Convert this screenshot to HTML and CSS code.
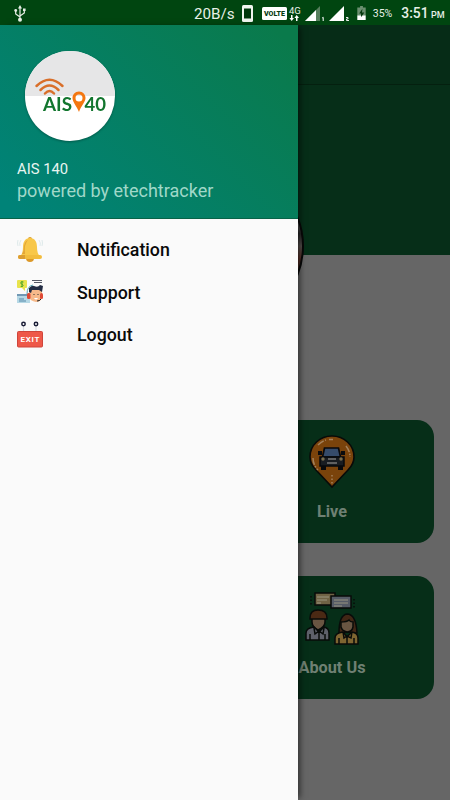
FILE: index.html
```html
<!DOCTYPE html>
<html lang="en">
<head>
<meta charset="utf-8">
<title>AIS 140</title>
<link rel="stylesheet" href="styles.css">
</head>
<body>
<div class="screen">
  <header class="status">
    <svg class="usb" width="12" height="17" viewBox="0 0 12 17" fill="none" stroke="#e8f0e8" stroke-width="1.200"><path d="M6 3v11M1.700 6v3L6 12M10.300 5v3L6 11"/><g fill="#e8f0e8" stroke="none"><path d="M6 0l2 3.500H4zM9 3.500h2.600v2.500H9z"/><circle cx="1.700" cy="5.500" r="1.400"/><circle cx="6" cy="14.700" r="2"/></g></svg>
    <span class="rate">20B/s</span>
    <svg class="phone" width="11" height="17" viewBox="0 0 11 17"><rect width="11" height="17" rx="1.500" fill="#f0f5f0"/><path fill="#00380c" d="M2 3.500h7v10H2z"/></svg>
    <svg class="volte" width="25" height="13" viewBox="0 0 25 13"><rect width="25" height="13" rx="1.500" fill="#fff"/><text x="2" y="9.300" textLength="21" lengthAdjust="spacingAndGlyphs">VOLTE</text></svg>
    <div class="net"><span>4G</span><svg width="10" height="6" viewBox="0 0 10 6" fill="#fff"><path d="M2 0h1.500v3H5L2.700 6 .4 3H2zM7 6h1.500V3H10L7.700 0 5.400 3H7z"/></svg></div>
    <svg class="sig1" width="20" height="15" viewBox="0 0 20 15"><path fill="#567f5d" d="M15 0v15H0z"/><path fill="#fff" d="M11 4v11H0z"/><path d="M17.200 12l1-.7V15" fill="none" stroke="#fff"/></svg>
    <svg class="sig2" width="21" height="15" viewBox="0 0 21 15"><path fill="#fff" d="M15 0v15H0z"/><path d="M17 11.500h2v1.500h-1.500v1.500H20" fill="none" stroke="#fff" stroke-width=".9"/></svg>
    <svg class="battery" width="9" height="14" viewBox="0 0 9 15"><path fill="#6b8f70" d="M3 0h3v1.500h3V10H0V1.500h3z"/><path fill="#fff" d="M0 10h9v5H0z"/><path fill="#06380f" d="M5.500 3L2 8h2v4l3.500-5H5z"/></svg>
    <span class="pct">35%</span>
    <span class="time">3:51 <small>PM</small></span>
  </header>
  <main class="home">
    <div class="bar"></div>
    <div class="banner"></div>
    <div class="cards">
      <section class="card">
        <svg width="46" height="54" viewBox="0 0 46 54"><path d="M23 1C11 1 1 10 1 22c0 5 2 9 6 13l16 17 16-17c4-4 6-8 6-13C45 10 35 1 23 1z" fill="#7a430b" stroke="#080a08" stroke-width="1.600"/><g fill="none" stroke="#a3815c" stroke-width="1.500"><path d="M9 10q4-4 8-5m3-.5h4M37 11q4 5 4 11M4 23q0 7 5 12" stroke-dasharray="7 1.500 1.500 1.500"/><path d="M23 40v10" stroke-dasharray="1.500 2"/></g><path d="M15.500 13h14l2 9h-18z" fill="#354b6a" stroke="#08090c" stroke-width="1.700"/><path d="M9 16h4v4H9zM32 16h4v4h-4z" fill="#090b0e"/><path d="M11 22h24v9H11z" fill="#181c21" stroke="#07090b" stroke-width="1.500"/><path d="M12 31h5v4h-5zM29 31h5v4h-5z" fill="#08090b"/><path d="M19 24h8M18 28h10" stroke="#777" stroke-width="1.500"/><circle cx="14" cy="24" r="1.700" fill="#786d4e"/><circle cx="32" cy="24" r="1.700" fill="#786d4e"/></svg>
        <h2>Live</h2>
      </section>
      <section class="card">
        <svg width="54" height="54" viewBox="0 0 54 54" stroke="#080b09" stroke-width="1.500"><path d="M10 2h20v12H10z" fill="#706345"/><path d="M26 5h20v12H26z" fill="#555b66"/><path d="M12 6h12M12 9h10M12 12h4M29 9h14M29 12h14M29 15h8" stroke="#999580" stroke-width="1"/><path d="M6 5v10M49 8v10" stroke-dasharray="1.500 2"/><path d="M7 25v6q0 5 6 8 7-3 7-8v-6z" fill="#695542"/><path d="M5 28v-1q0-8 8-8 9 0 9 8v1z" fill="#4a2914"/><path d="M1 49v-7q0-5 8-6l5 5 5-5q5 1 5 6v7z" fill="#5e606a"/><path d="M5 43v6M20 43v6M9 37l1 6 4-3 4 3 1-6M14 40v9" fill="none"/><path d="M34 42q0-18 8-19 9 0 10 19-4 1-7-1h-5q-3 2-6 1z" fill="#412615"/><path d="M36 31q6 0 8-2 1 2 4 2v5q-1 5-6 5-5-1-6-5z" fill="#695542"/><path d="M30 53v-6q0-5 8-6l4 5 5-5q6 1 6 6v6z" fill="#7e6531"/><path d="M38 41l1 6 3-2 4 2 1-6M42 46v7M34 47v6M49 47v6" fill="none"/></svg>
        <h2>About Us</h2>
      </section>
    </div>
    <div class="avatar"></div>
  </main>
  <aside class="drawer">
    <div class="profile">
      <svg class="logo" width="98" height="98" viewBox="0 0 98 98"><defs><clipPath id="disc"><circle cx="49" cy="49" r="45"/></clipPath></defs><g clip-path="url(#disc)"><path fill="#fff" d="M0 0h98v98H0z"/><path fill="#e6e6e7" d="M0 0h98v49H0z"/></g><g fill="none" stroke="#d96f2a" stroke-width="2.500" stroke-linecap="round"><path d="M15.500 39q13-12.500 26 0M19.500 43q9-9 18 0M24 46.500q4.500-5 9 0"/></g><g class="logo-text"><text x="22" y="63.500" textLength="29" lengthAdjust="spacingAndGlyphs">AIS</text><text x="63.500" y="63.500" textLength="21.500" lengthAdjust="spacingAndGlyphs">40</text></g><path fill="#f47710" fill-rule="evenodd" d="M58 44.500c-4 0-6.500 3-6.500 6.500 0 4 4 8 6.500 14 2-6 6.500-10 6.500-14 0-3.500-2.500-6.500-6.500-6.500zm0 3a3.500 3.500 0 1 1 0 7 3.500 3.500 0 0 1 0-7z"/></svg>
      <p class="name">AIS 140</p>
      <p class="powered">powered by etechtracker</p>
    </div>
    <nav class="menu">
      <a><svg width="26" height="27" viewBox="0 0 26 27"><path d="M4 4q-2 3-1 6M1 4q-1 3 0 6M22 4q2 3 1 6M25 4q1 3 0 6" fill="none" stroke="#d7e5e6" stroke-width=".8"/><circle cx="13" cy="3" r="2" fill="#d79b29"/><path d="M9 22h8q0 4-4 4t-4-4" fill="#dc9929"/><path d="M13 2C8 2 6 6 6 11q0 7-3 9h20q-3-2-3-9c0-5-2-9-7-9z" fill="#f8c749"/><path d="M11 4q-4 4-3 14H5q2-3 2-8 1-5 4-6z" fill="#e4a637"/><rect x="1" y="19" width="24" height="4" rx="2" fill="#f2bc3d"/><path d="M3 19h5v4H3q-2 0-2-2t2-2" fill="#dc9e32"/></svg><span>Notification</span></a>
      <a><svg width="26" height="26" viewBox="0 0 26 26"><path d="M0 15h13v9H0z" fill="#b6d8e5"/><path d="M0 15h13v2H0z" fill="#7198b4"/><path d="M2 20h5M2 22h7" stroke="#5689aa"/><path d="M1 1h8q1 0 1 1v6q0 1-1 1H8v3L5 9H1Q0 9 0 8V2q0-1 1-1" fill="#e8e34c"/><path d="M6.500 3Q3.500 2 3.700 4q0 1 1.500 1.200Q7 6 5.500 7.500H3.700M5 2v6" fill="none" stroke="#54a72a"/><path d="M15 1.500h10M17 3.500h8" stroke="#555966"/><path d="M12 11h13v7q-1 5-6 5-6-1-7-5z" fill="#f6b98a"/><path d="M12 13V9q3-3 5-2 4 2 6-1l3 1-1 6-3-2H15l-1 3z" fill="#222c43"/><path d="M10 15q0-8 6-9" fill="none" stroke="#58a8b5"/><rect x="10" y="14" width="3.500" height="6" rx="1.500" fill="#df4935"/><rect x="23" y="14" width="3" height="6" rx="1.500" fill="#df4935"/><path d="M17 15v1M21 15v1" stroke="#333"/><path d="M17 19h4q-2 3-4 0" fill="#fff"/><path d="M24 20q-1 2-4 2" fill="none" stroke="#222"/></svg><span>Support</span></a>
      <a><svg width="26" height="27" viewBox="0 0 26 27"><path d="M6.500 3v8M19 3v8" stroke="#d9dce2" stroke-width="1.200"/><g fill="#fff" stroke="#191c36" stroke-width="1.500"><circle cx="6.500" cy="3" r="1.700"/><circle cx="19" cy="3" r="1.700"/></g><rect x=".5" y="10.500" width="25" height="15.500" rx="1" fill="#ee5849" stroke="#cf453b"/><text class="exit" x="3.500" y="21" textLength="19">EXIT</text></svg><span>Logout</span></a>
    </nav>
  </aside>
</div>
</body>
</html>
```
FILE: styles.css
```css
* { box-sizing: border-box; }
body { margin: 0; font-family: Roboto, "Liberation Sans", sans-serif; }
h2, p { margin: 0; }
svg { display: block; flex: none; }
.screen { position: relative; width: 450px; height: 800px; overflow: hidden; background: #666; }
.status { display: flex; align-items: center; height: 25px; padding: 1px 7px 0 14px; background: #004510; color: #e7f0e7; white-space: nowrap; }
.rate { width: 40px; margin-left: 168px; font-size: 15.2px; line-height: 24px; padding-top: 1px; }
.phone { margin-left: 8px; }
.volte { margin-left: 9px; }
.volte text { fill: #073b12; font: 900 7px Roboto, sans-serif; }
.net { width: 12px; margin-left: 2px; font-size: 9.5px; line-height: 9px; }
.sig1 { margin-left: 4px; }
.sig2 { margin-left: 4px; }
.battery { margin-left: 7px; }
.pct { width: 21px; margin-left: 7px; font-size: 10.5px; }
.time { margin-left: 9px; font-size: 13.8px; font-weight: 500; }
.time small { margin-left: -1px; font-size: 9px; }
.home { position: relative; height: 775px; }
.bar { height: 60px; background: #062c17; border-bottom: 1px solid #04200f; }
.banner { height: 170px; background: #062e18; }
.cards { display: grid; gap: 33px; width: 204px; margin: 165px 16px 0 auto; }
.card { display: flex; flex-direction: column; align-items: center; height: 123px; padding-top: 15px; border-radius: 17px; background: #062e18; color: #6f8073; }
.card h2 { margin-top: 13px; font-size: 16.3px; line-height: 20px; font-weight: 700; }
.avatar { position: absolute; left: 146px; top: 142px; width: 158px; height: 158px; border: 2px solid #080808; border-radius: 50%; background: linear-gradient(#4b4b4b 38%, #282828 42%, #55504d 50%, #5a3028 58%, #422820 64%, #4b4b4b 68%); }
.drawer { position: absolute; left: 0; top: 25px; width: 298px; height: 775px; background: #fafafa; box-shadow: 4px 0 6px -2px rgba(0, 0, 0, .55); }
.profile { height: 194px; padding: 22px 17px 0; background: linear-gradient(45deg, #008378 5%, #0a7a4b 95%); border-bottom: 1px solid #086348; }
.logo { margin-left: 4px; filter: drop-shadow(0 1px 1px rgba(0, 0, 0, .3)); }
.logo-text { fill: #12762e; font: 700 19px Lato, sans-serif; }
.name { margin-top: 14px; color: #e8f5f1; font-size: 14.8px; line-height: 20px; }
.powered { margin-top: 1px; color: #a0d8c9; font-size: 18px; line-height: 21px; white-space: nowrap; }
.menu { display: grid; grid-auto-rows: 42.5px; padding: 9px 17px; }
.menu a { display: flex; align-items: center; gap: 34px; color: #0a0a0a; font-size: 17.8px; font-weight: 500; }
.menu span { padding-top: 1px; }
.exit { fill: #fff; font: 700 8px Roboto, sans-serif; }
```
